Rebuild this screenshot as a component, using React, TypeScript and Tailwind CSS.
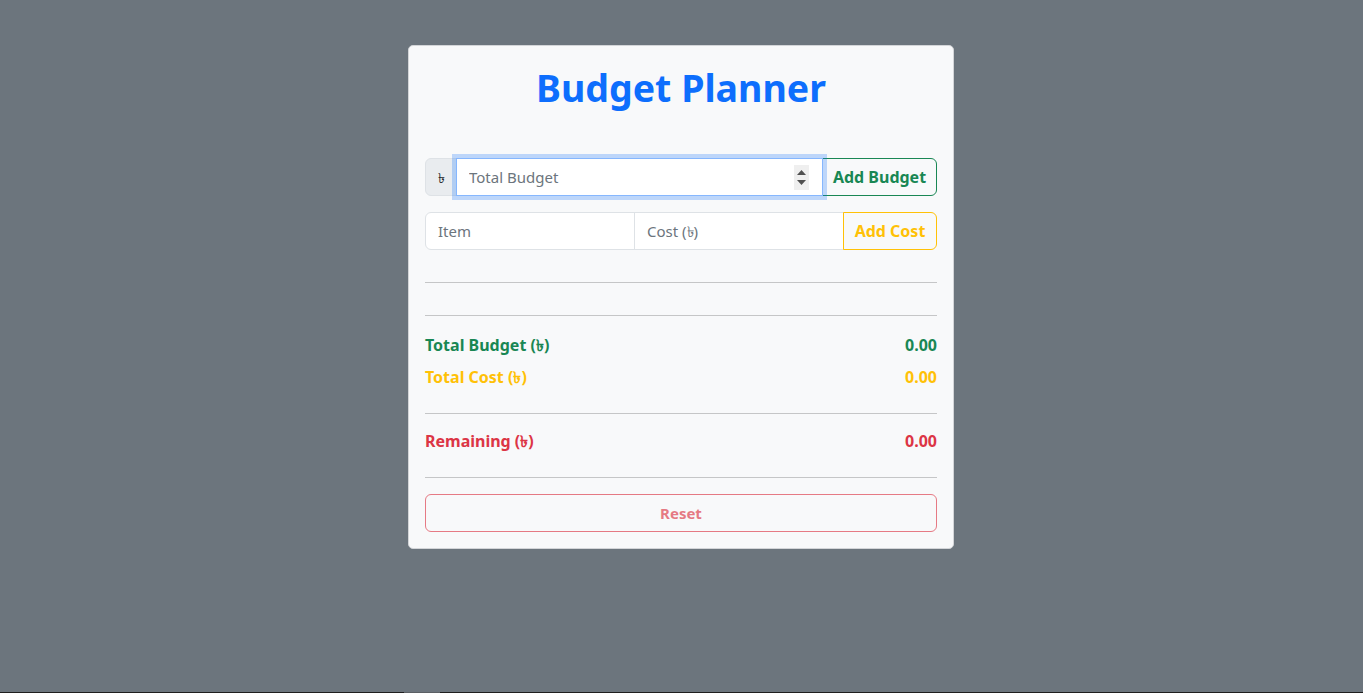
import React from "react";

const font = { fontFamily: '"Noto Sans", "Open Sans", sans-serif' };

function Hr() {
  return <div className="h-px w-full bg-[#c5c6c7]" />;
}

export default function App() {
  return (
    <div className="flex flex-col w-full h-[693px] overflow-hidden bg-[#6c757d]" style={font}>
      <div className="h-[692px] w-full flex justify-center pt-[45px] pr-px">
        <div className="w-[546px] h-[504px] bg-[#f8f9fa] border border-[#d3d5d8] rounded-[5px] px-[16px] pt-[16px] flex flex-col">
          <h1 className="mt-[2px] text-center text-[37.5px] leading-[48px] font-bold text-[#0d6efd]">
            Budget Planner
          </h1>

          {/* group 1 */}
          <div className="mt-[46px] flex h-[38px] w-full">
            <div className="w-[32px] h-[38px] shrink-0 flex items-center justify-center bg-[#e9ecef] border border-[#dee2e6] rounded-l-[6px] text-[#212529] text-[14px]">
              ৳
            </div>
            <div className="relative flex-1 h-[38px] flex items-center bg-white border border-[#86b7fe] -ml-px shadow-[0_0_0_4px_rgba(13,110,253,0.25)] z-10">
              <input
                className="flex-1 min-w-0 h-full bg-transparent outline-none pl-[12px] text-[15px] text-[#212529] placeholder:text-[#6c757d]"
                placeholder="Total Budget"
                style={font}
              />
              <div className="mr-[13px] w-[15px] h-[25px] bg-[#efefef] flex flex-col items-center justify-center gap-[5px]">
                <svg width="9" height="5" viewBox="0 0 9 5"><path d="M0 5 L4.5 0 L9 5 Z" fill="#505050" /></svg>
                <svg width="9" height="5" viewBox="0 0 9 5"><path d="M0 0 L4.5 5 L9 0 Z" fill="#505050" /></svg>
              </div>
            </div>
            <button
              className="w-[115px] shrink-0 h-[38px] border border-[#198754] rounded-r-[6px] text-[#198754] font-bold text-[16px] -ml-px"
              style={font}
            >
              Add Budget
            </button>
          </div>

          {/* group 2 */}
          <div className="mt-[16px] flex h-[38px] w-full">
            <input
              className="w-[210px] h-[38px] bg-white border border-[#dee2e6] rounded-l-[6px] pl-[12px] outline-none text-[15px] placeholder:text-[#6c757d]"
              placeholder="Item"
              style={font}
            />
            <input
              className="w-[210px] h-[38px] bg-white border border-[#dee2e6] -ml-px pl-[12px] outline-none text-[15px] placeholder:text-[#6c757d]"
              placeholder="Cost (৳)"
              style={font}
            />
            <button
              className="flex-1 h-[38px] border border-[#ffc107] rounded-r-[6px] text-[#ffc107] font-bold text-[16px] -ml-px"
              style={font}
            >
              Add Cost
            </button>
          </div>

          <div className="mt-[32px]"><Hr /></div>
          <div className="mt-[32px]"><Hr /></div>

          <div className="mt-[17px] flex justify-between h-[24px] items-center font-bold text-[16px] text-[#198754]">
            <span>Total Budget (৳)</span>
            <span>0.00</span>
          </div>
          <div className="mt-[8px] flex justify-between h-[24px] items-center font-bold text-[16px] text-[#ffc107]">
            <span>Total Cost (৳)</span>
            <span>0.00</span>
          </div>

          <div className="mt-[24px]"><Hr /></div>

          <div className="mt-[15px] flex justify-between h-[24px] items-center font-bold text-[16px] text-[#dc3545]">
            <span>Remaining (৳)</span>
            <span>0.00</span>
          </div>

          <div className="mt-[24px]"><Hr /></div>

          <button
            className="mt-[16px] w-full h-[38px] border border-[#dc3545] rounded-[6px] text-[#dc3545] font-bold text-[15px] opacity-65"
            style={font}
          >
            Reset
          </button>
        </div>
      </div>
      <div className="h-px w-full bg-[#1e1e1e] flex">
        <div className="ml-[404px] w-[36px] h-px bg-[#5b5f64]" />
      </div>
    </div>
  );
}
